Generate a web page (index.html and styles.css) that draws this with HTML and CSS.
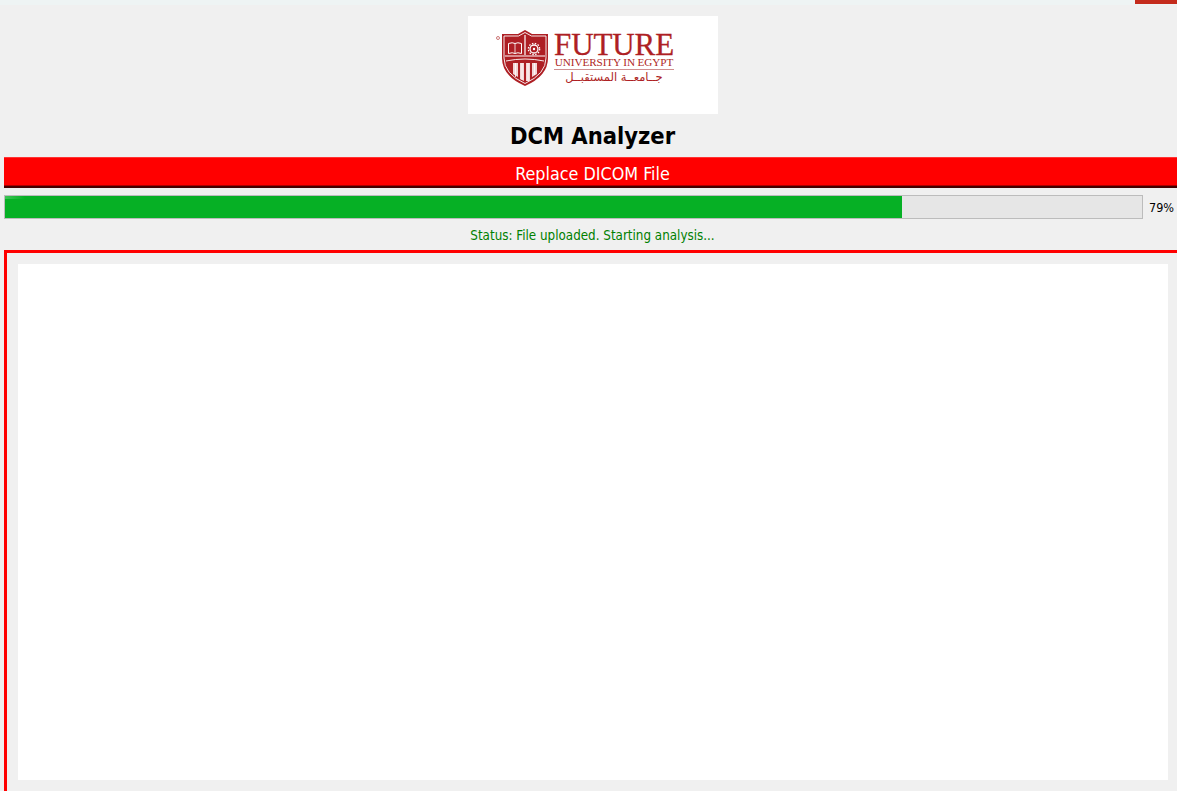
FILE: index.html
```html
<!DOCTYPE html>
<html lang="en">
<head>
<meta charset="utf-8">
<title>DCM Analyzer</title>
<link rel="stylesheet" href="styles.css">
</head>
<body>
<header class="titlebar"><span class="close-btn"></span></header>
<main class="app">
  <div class="logo-row">
    <div class="logo">
      <span class="reg"></span>
      <svg class="shield" width="50" height="60" viewBox="0 0 50 60" aria-hidden="true">
        <path d="M25 2l7 4h16v24q0 18-23 28Q2 48 2 30V6h16z" fill="#ae1f24"/>
        <path d="M25 4.500l6.500 3.500H46v22q0 16-21 25.500Q4 46 4 30V8h14.500z" fill="none" stroke="#fff" stroke-width=".9"/>
        <path d="M25 7v20M5 28h40" stroke="#fff" stroke-width="1.200"/>
        <path d="M6 33q19-4 38 0" fill="none" stroke="#fff" stroke-width=".9"/>
        <path d="M8.500 15.500q4-1.500 6.500 0q2.500-1.500 6.500 0v10q-4-1.500-6.500 0q-2.500-1.500-6.500 0z" fill="none" stroke="#fff" stroke-width="1"/>
        <path d="M15 15.500v10" stroke="#fff" stroke-width=".8"/>
        <circle cx="34" cy="21" r="4" fill="none" stroke="#fff" stroke-width="1.300"/>
        <circle cx="34" cy="21" r="5.700" fill="none" stroke="#fff" stroke-width="1.200" stroke-dasharray="1.500 1.500"/>
        <circle cx="34" cy="21" r="1.200" fill="#fff"/>
        <path d="M13 35h5v14l-5-3zM20 35h4v18l-4-2zM26 35h4v18l-4 0zM32 35h5v11l-5 3z" fill="#f3d6d6"/>
        <path d="M15.500 35v14M22 35v17M28 35v18M34.500 35v12" stroke="#fff" stroke-width=".8"/>
      </svg>
      <div class="wordmark">
        <div class="wm-future">FUTURE</div>
        <div class="wm-univ">UNIVERSITY IN EGYPT</div>
        <div class="wm-arabic" lang="ar" dir="rtl">جــامعــة المستقبــل</div>
      </div>
    </div>
  </div>
  <h1 class="title">DCM Analyzer</h1>
  <button class="replace-btn" type="button">Replace DICOM File</button>
  <div class="progress-row">
    <div class="progress"><div class="progress-chunk" style="width:78.9%"></div></div>
    <span class="progress-label">79%</span>
  </div>
  <p class="status">Status: File uploaded. Starting analysis...</p>
  <section class="frame"><div class="viewer"></div></section>
</main>
</body>
</html>
```
FILE: styles.css
```css
html, body {
  margin: 0;
  padding: 0;
  height: 791px;
  overflow: hidden;
  background: #f0f0f0;
  font-family: "DejaVu Sans Condensed", "DejaVu Sans", sans-serif;
}
.titlebar {
  height: 5px;
  background: #eef4f4;
  display: flex;
  justify-content: flex-end;
  align-items: flex-start;
}
.close-btn {
  width: 42px;
  height: 4px;
  background: #c42b1c;
}
.app {
  width: 1177px;
  margin-left: 4px;
  display: flex;
  flex-direction: column;
}
.logo-row {
  display: flex;
  justify-content: center;
  padding-top: 11px;
  padding-left: 1px;
}
.logo {
  position: relative;
  width: 250px;
  height: 98px;
  background: #fff;
  display: flex;
  align-items: flex-start;
  box-sizing: border-box;
  padding: 12px 0 0 32px;
  color: #ae1f24;
}
.reg {
  position: absolute;
  left: 28px;
  top: 20px;
  width: 2px;
  height: 2px;
  border: 1px solid #c77;
  border-radius: 50%;
}
.shield { flex: none; }
.wordmark {
  margin-left: 4px;
  margin-top: 4px;
  width: 120px;
  font-family: "Liberation Serif", serif;
  text-align: center;
}
.wm-future {
  font-size: 31px;
  line-height: 25px;
  letter-spacing: -.1px;
  white-space: nowrap;
  -webkit-text-stroke: .3px #ae1f24;
}
.wm-univ {
  font-size: 11.200px;
  line-height: 10px;
  letter-spacing: -.1px;
  white-space: nowrap;
  padding-bottom: 2px;
  border-bottom: 1px solid #cf8f8f;
}
.wm-arabic {
  font-family: "DejaVu Sans", sans-serif;
  font-size: 11.500px;
  line-height: 14px;
  white-space: nowrap;
}
.title {
  margin: 8px 0 0;
  height: 35px;
  font-size: 23.500px;
  line-height: 29px;
  font-weight: bold;
  text-align: center;
  color: #000;
}
.replace-btn {
  display: block;
  width: 100%;
  height: 31px;
  margin: 0;
  padding: 2px 0 0;
  border: 0;
  border-top: 1px solid #f33;
  border-bottom: 2px solid #400;
  box-shadow: inset 0 -1px 0 #a00;
  background: #f00;
  color: #fff;
  font: inherit;
  font-size: 17.800px;
}
.progress-row {
  margin-top: 7px;
  display: flex;
  align-items: center;
  gap: 6px;
}
.progress {
  position: relative;
  width: 1139px;
  height: 24px;
  box-sizing: border-box;
  border: 1px solid #bcbcbc;
  background: #e6e6e6;
}
.progress-chunk {
  position: relative;
  height: 100%;
  background: #06b025;
}
.progress-chunk::before {
  content: "";
  position: absolute;
  left: 0;
  top: 0;
  width: 20px;
  height: 3px;
  background: linear-gradient(to right, #3cc455, #06b025);
}
.progress-label {
  font-size: 12.500px;
  color: #000;
}
.status {
  margin: 8px 0 0;
  height: 23px;
  font-size: 13.300px;
  line-height: 18px;
  text-align: center;
  color: #008000;
}
.frame {
  box-sizing: border-box;
  border: 3px solid #f00;
  padding: 11px 10px 11px 11px;
}
.viewer {
  height: 516px;
  background: #fff;
}
```
